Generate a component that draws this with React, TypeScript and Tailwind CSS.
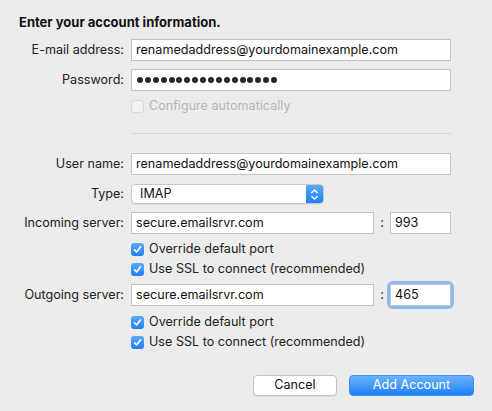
import React from 'react'

const FONT = '"Inter", "Liberation Sans", sans-serif'

const Check = ({ checked = false, disabled = false }: { checked?: boolean; disabled?: boolean }) =>
    checked ? (
        <div className="w-[13px] h-[13px] rounded-[3px] bg-gradient-to-b from-[#5aa9fb] to-[#1d7ff5] flex items-center justify-center">
            <svg width="9" height="9" viewBox="0 0 9 9" fill="none">
                <path d="M1.5 4.8 L3.6 7 L7.6 1.8" stroke="white" strokeWidth="1.6" strokeLinecap="round" strokeLinejoin="round" />
            </svg>
        </div>
    ) : (
        <div className={`w-[13px] h-[13px] rounded-[3px] border ${disabled ? 'border-[#d8d8d8] bg-[#f3f3f3]' : 'border-[#b0b0b0] bg-white'}`} />
    )

const Label = ({ children }: { children: React.ReactNode }) => (
    <div className="w-[124px] text-right text-[12.6px] text-[#222] shrink-0">{children}</div>
)

const TextBox = ({ value, className = 'w-[320px]' }: { value: React.ReactNode; className?: string }) => (
    <div className={`h-[22px] bg-white border border-[#c3c3c3] flex items-center pl-[4px] text-[12.6px] text-[#111] ${className}`}>
        {value}
    </div>
)

const CheckRow = ({ text, checked, disabled, className = '' }: { text: string; checked?: boolean; disabled?: boolean; className?: string }) => (
    <div className={`flex items-center h-[16px] pl-[131px] ${className}`}>
        <Check checked={checked} disabled={disabled} />
        <span className={`ml-[5px] text-[12.6px] ${disabled ? 'text-[#b4b4b4]' : 'text-[#222]'}`}>{text}</span>
    </div>
)

export default function App() {
    const dots = Array.from({ length: 18 })
    return (
        <div className="w-[492px] h-[411px] bg-[#ececec] overflow-hidden" style={{ fontFamily: FONT }}>
            <div className="pt-[14px] pl-[19px] h-[30px] text-[13px] font-bold text-[#111] leading-[16px]">
                Enter your account information.
            </div>

            <div className="mt-[9px] flex items-center">
                <Label>E-mail address:</Label>
                <div className="ml-[7px]">
                    <TextBox value="renamedaddress@yourdomainexample.com" />
                </div>
            </div>

            <div className="mt-[8px] flex items-center">
                <Label>Password:</Label>
                <div className="ml-[7px]">
                    <TextBox
                        value={
                            <div className="flex gap-[1.9px] pl-[1px]">
                                {dots.map((_, i) => (
                                    <div key={i} className="w-[6px] h-[6px] rounded-full bg-[#262626]" />
                                ))}
                            </div>
                        }
                    />
                </div>
            </div>

            <CheckRow text="Configure automatically" disabled className="mt-[7px]" />

            <div className="ml-[131px] mt-[19px] w-[320px] h-px bg-[#d6d6d6]" />

            <div className="mt-[19px] flex items-center">
                <Label>User name:</Label>
                <div className="ml-[7px]">
                    <TextBox value="renamedaddress@yourdomainexample.com" />
                </div>
            </div>

            <div className="mt-[9px] flex items-center">
                <Label>Type:</Label>
                <div className="ml-[7px] w-[193px] h-[20px] flex rounded-[4px] bg-white border border-[#c8c8c8] shadow-[0_1px_0_rgba(0,0,0,0.05)] overflow-hidden">
                    <div className="flex-1 flex items-center pl-[8px] text-[12.6px] text-[#111]">IMAP</div>
                    <div className="w-[17px] h-full bg-gradient-to-b from-[#5aa9fb] to-[#1a7ff7] flex items-center justify-center">
                        <svg width="9" height="13" viewBox="0 0 9 13" fill="none">
                            <path d="M1.8 4.6 L4.5 1.9 L7.2 4.6" stroke="white" strokeWidth="1.4" strokeLinecap="round" strokeLinejoin="round" />
                            <path d="M1.8 8.4 L4.5 11.1 L7.2 8.4" stroke="white" strokeWidth="1.4" strokeLinecap="round" strokeLinejoin="round" />
                        </svg>
                    </div>
                </div>
            </div>

            <div className="mt-[8px] flex items-center">
                <Label>Incoming server:</Label>
                <div className="ml-[7px] flex items-center">
                    <TextBox value="secure.emailsrvr.com" className="w-[243px]" />
                    <span className="w-[16px] text-center text-[13px] text-[#222]">:</span>
                    <TextBox value="993" className="w-[61px]" />
                </div>
            </div>

            <CheckRow text="Override default port" checked className="mt-[7px]" />
            <CheckRow text="Use SSL to connect (recommended)" checked className="mt-[4px]" />

            <div className="mt-[7px] flex items-center">
                <Label>Outgoing server:</Label>
                <div className="ml-[7px] flex items-center">
                    <TextBox value="secure.emailsrvr.com" className="w-[243px]" />
                    <span className="w-[16px] text-center text-[13px] text-[#222]">:</span>
                    <div className="rounded-[3px] ring-[3px] ring-[#8cb8f0]">
                        <TextBox value="465" className="w-[61px] border-[#7aa6e6]" />
                    </div>
                </div>
            </div>

            <CheckRow text="Override default port" checked className="mt-[8px]" />
            <CheckRow text="Use SSL to connect (recommended)" checked className="mt-[4px]" />

            <div className="mt-[25px] flex pl-[253px] gap-[12px]">
                <div className="w-[84px] h-[21px] rounded-[4px] bg-white border border-[#c4c4c4] shadow-[0_1px_0_rgba(0,0,0,0.06)] flex items-center justify-center text-[12.6px] text-[#111]">
                    Cancel
                </div>
                <div className="w-[125px] h-[21px] rounded-[4px] bg-gradient-to-b from-[#6cb3fa] to-[#147ff8] border border-[#3d8ef2] flex items-center justify-center text-[12.6px] text-white">
                    Add Account
                </div>
            </div>
        </div>
    )
}
